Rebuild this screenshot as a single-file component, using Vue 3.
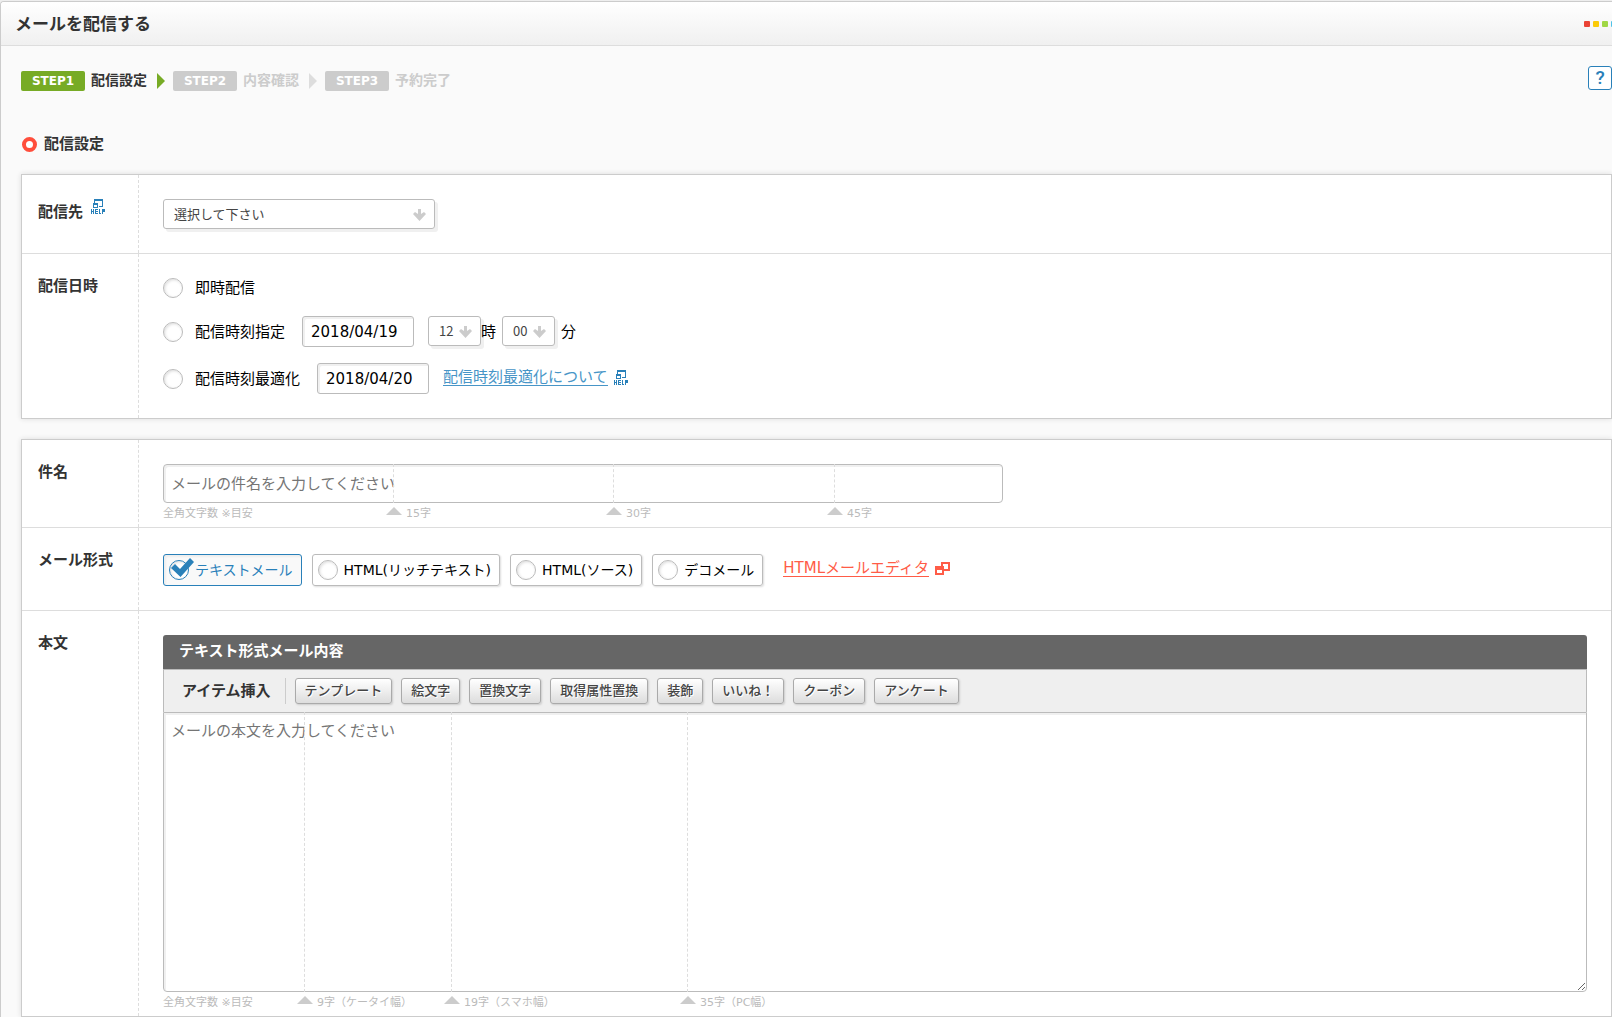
<script setup>
import { ref } from 'vue'

const steps = ['配信設定', '内容確認', '予約完了']
const timing = ref('')
const fixedDate = ref('2018/04/19')
const bestDate = ref('2018/04/20')
const subject = ref('')
const body = ref('')
const format = ref('text')
const formats = [
  { id: 'text', label: 'テキストメール' },
  { id: 'rich', label: 'HTML(リッチテキスト)' },
  { id: 'source', label: 'HTML(ソース)' },
  { id: 'deco', label: 'デコメール' }
]
const items = ['テンプレート', '絵文字', '置換文字', '取得属性置換', '装飾', 'いいね！', 'クーポン', 'アンケート']
const subjectMarks = [
  { left: 230, label: '15字' },
  { left: 450, label: '30字' },
  { left: 671, label: '45字' }
]
const bodyMarks = [
  { left: 141, label: '9字（ケータイ幅）' },
  { left: 288, label: '19字（スマホ幅）' },
  { left: 524, label: '35字（PC幅）' }
]
</script>

<template>
  <main class="page">
    <header class="bar">
      <h1>メールを配信する</h1>
      <div class="dots"><i class="red"></i><i class="yellow"></i><i class="green"></i><i class="blue"></i></div>
    </header>

    <div class="top">
      <ol class="steps">
        <li v-for="(s, i) in steps" :key="s" :class="{ on: i === 0 }">
          <b>STEP{{ i + 1 }}</b><span>{{ s }}</span><i v-if="i < 2"></i>
        </li>
      </ol>
      <button class="help" type="button">?</button>
    </div>

    <h2><i class="ring"></i>配信設定</h2>

    <section class="panel">
      <div class="row">
        <div class="name">
          <label for="target">配信先</label>
          <a class="help-icon" href="#" aria-label="ヘルプ">
            <svg width="14" height="15" viewBox="0 0 14 15" shape-rendering="crispEdges" fill="#2980b9">
              <path d="M3 0h9v8H8V7h3V2H4v2H3zM2 4h5v5H2zM3 6v2h3V6z" fill-rule="evenodd" />
              <path d="M0 10h1v2h1v-2h1v5H2v-2H1v2H0zM4 10h3v1H5v1h2v1H5v1h2v1H4zM8 10h1v4h1v1H8zM11 10h3v3h-2v2h-1z" />
            </svg>
          </a>
        </div>
        <div class="value">
          <div class="select wide">
            <select id="target"><option>選択して下さい</option></select>
            <svg viewBox="0 0 14 13"><path d="M5 0h3v5l3-2 2 2-6.500 7L0 5l2-2 3 2z" /></svg>
          </div>
        </div>
      </div>

      <div class="row">
        <div class="name">配信日時</div>
        <div class="value timing">
          <div class="line first">
            <label class="choice"><input v-model="timing" type="radio" name="timing" value="now">即時配信</label>
          </div>
          <div class="line">
            <label class="choice"><input v-model="timing" type="radio" name="timing" value="fixed">配信時刻指定</label>
            <input v-model="fixedDate" class="date" type="text" aria-label="配信日">
            <div class="select small">
              <select id="hour"><option>12</option></select>
              <svg viewBox="0 0 14 13"><path d="M5 0h3v5l3-2 2 2-6.500 7L0 5l2-2 3 2z" /></svg>
            </div>
            <label class="hour" for="hour">時</label>
            <div class="select small">
              <select id="minute"><option>00</option></select>
              <svg viewBox="0 0 14 13"><path d="M5 0h3v5l3-2 2 2-6.500 7L0 5l2-2 3 2z" /></svg>
            </div>
            <label class="minute" for="minute">分</label>
          </div>
          <div class="line">
            <label class="choice"><input v-model="timing" type="radio" name="timing" value="best">配信時刻最適化</label>
            <input v-model="bestDate" class="date" type="text" aria-label="最適化の配信日">
            <a class="about" href="#"><span>配信時刻最適化について</span>
              <svg width="14" height="15" viewBox="0 0 14 15" shape-rendering="crispEdges" fill="#2980b9">
                <path d="M3 0h9v8H8V7h3V2H4v2H3zM2 4h5v5H2zM3 6v2h3V6z" fill-rule="evenodd" />
                <path d="M0 10h1v2h1v-2h1v5H2v-2H1v2H0zM4 10h3v1H5v1h2v1H5v1h2v1H4zM8 10h1v4h1v1H8zM11 10h3v3h-2v2h-1z" />
              </svg>
            </a>
          </div>
        </div>
      </div>
    </section>

    <section class="panel">
      <div class="row">
        <label class="name" for="subject">件名</label>
        <div class="value ruled">
          <div class="field subject">
            <input id="subject" v-model="subject" type="text" placeholder="メールの件名を入力してください">
            <i v-for="m in subjectMarks" :key="m.label" class="guide" :style="{ left: m.left + 'px' }"></i>
          </div>
          <div class="ruler">
            <span>全角文字数 ※目安</span>
            <span v-for="m in subjectMarks" :key="m.label" class="mark" :style="{ left: m.left + 'px' }">{{ m.label }}</span>
          </div>
        </div>
      </div>

      <div class="row">
        <div class="name">メール形式</div>
        <div class="value formats">
          <label v-for="f in formats" :key="f.id" class="format" :class="{ on: format === f.id }">
            <input v-model="format" type="radio" name="format" :value="f.id">
            <svg v-if="format === f.id" class="check" viewBox="0 0 24 20"><path d="M1 10l4-4 5 5L20 0l4 4-13.500 15z" /></svg>
            {{ f.label }}
          </label>
          <a class="editor-link" href="#"><span>HTMLメールエディタ</span>
            <svg width="15" height="13" viewBox="0 0 15 13" shape-rendering="crispEdges" fill="#ff5c47">
              <path d="M6 0h9v9H9V7h4V2H8v2H6zM0 4h9v9H0zM2 8v3h5V8z" fill-rule="evenodd" />
            </svg>
          </a>
        </div>
      </div>

      <div class="row">
        <label class="name" for="body">本文</label>
        <div class="value ruled">
          <div class="editor">
            <h3>テキスト形式メール内容</h3>
            <div class="tools">
              <strong>アイテム挿入</strong>
              <button v-for="t in items" :key="t" type="button">{{ t }}</button>
            </div>
            <div class="field">
              <textarea id="body" v-model="body" placeholder="メールの本文を入力してください"></textarea>
              <i v-for="m in bodyMarks" :key="m.label" class="guide" :style="{ left: m.left + 'px' }"></i>
            </div>
          </div>
          <div class="ruler">
            <span>全角文字数 ※目安</span>
            <span v-for="m in bodyMarks" :key="m.label" class="mark" :style="{ left: m.left + 'px' }">{{ m.label }}</span>
          </div>
        </div>
      </div>
    </section>
  </main>
</template>

<style>
body {
  background: #eee;
}
</style>

<style scoped>
* {
  box-sizing: border-box;
}
.page {
  margin-top: 1px;
  border: 1px solid #ccc;
  border-width: 1px 0 0 1px;
  border-radius: 4px 0 0 0;
  background: #fafafa;
  color: #333;
  font: 15px/20px "DejaVu Sans", "Noto Sans CJK JP", sans-serif;
  overflow: hidden;
}
input,
select,
textarea,
button {
  margin: 0;
  font: inherit;
}
.bar {
  display: flex;
  align-items: center;
  justify-content: space-between;
  height: 44px;
  padding-left: 14px;
  border-bottom: 1px solid #ddd;
  background: linear-gradient(#fff, #f0f0f0);
}
h1,
h2,
h3 {
  margin: 0;
}
h1 {
  font-size: 17px;
  line-height: 24px;
}
.dots {
  display: flex;
  gap: 3px;
  margin-right: -5px;
}
.dots i {
  width: 6px;
  height: 6px;
  border-radius: 1px;
}
.red { background: #ea4335; }
.yellow { background: #fbcb09; }
.green { background: #a0d745; }
.blue { background: #4fc3e8; }
.top {
  display: flex;
  justify-content: space-between;
  padding: 20px 0 0 20px;
}
.steps {
  display: flex;
  gap: 8px;
  margin: 5px 0 0;
  padding: 0;
  list-style: none;
  color: #ccc;
  font-size: 14px;
  font-weight: bold;
}
.steps li {
  display: flex;
  align-items: center;
  height: 20px;
}
.steps b {
  width: 64px;
  border-radius: 2px;
  background: #ccc;
  color: #fff;
  font-size: 12px;
  text-align: center;
}
.steps span {
  margin: 0 10px 0 6px;
  padding-bottom: 2px;
  line-height: 18px;
}
.steps i {
  border: 8px solid transparent;
  border-width: 8px 0 8px 8px;
  border-left-color: #ddd;
}
.steps .on { color: #333; }
.steps .on b { background: #77ab25; }
.steps .on i { border-left-color: #77ab25; }
.help {
  width: 24px;
  height: 24px;
  padding: 0;
  border: 1px solid #2980b9;
  border-radius: 3px;
  background: #fff;
  color: #2980b9;
  font: 500 19px/22px Roboto, sans-serif;
}
h2 {
  display: flex;
  align-items: center;
  gap: 7px;
  padding: 43px 0 0 21px;
  font-size: 15px;
  line-height: 20px;
}
.ring {
  width: 15px;
  height: 15px;
  border: 4px solid #ff4e3c;
  border-radius: 50%;
  background: #fff;
}
.panel {
  margin: 20px 0 0 20px;
  border: 1px solid #ccc;
  background: #fff;
  box-shadow: 0 0 5px #ddd;
}
.row {
  display: grid;
  grid-template-columns: 117px 1fr;
}
.row + .row {
  border-top: 1px solid #ddd;
}
.name {
  display: flex;
  gap: 8px;
  padding: 22px 0 0 16px;
  border-right: 1px dashed #ddd;
  font-weight: bold;
}
.row:first-child > .name > label {
  padding-top: 5px;
}
.help-icon {
  height: 16px;
  margin-top: 2px;
}
.help-icon svg {
  display: block;
}
.value {
  min-width: 0;
  padding: 24px;
  color: #000;
}
.select {
  position: relative;
  height: 30px;
}
.wide { width: 272px; }
.small { width: 53px; }
.select select {
  width: 100%;
  height: 30px;
  padding: 0 10px;
  appearance: none;
  border: 1px solid #bbb;
  border-radius: 3px;
  background: #fff;
  box-shadow: 3px 3px 0 #f0f0f0;
  color: #444;
  font: 13px/28px "Noto Sans CJK JP", sans-serif;
}
.select svg {
  position: absolute;
  top: 10px;
  right: 8px;
  width: 14px;
  height: 13px;
  fill: #ccc;
  pointer-events: none;
}
.timing {
  display: flex;
  flex-direction: column;
  gap: 16px;
}
.line {
  display: flex;
  align-items: center;
  height: 31px;
}
.line .select {
  align-self: flex-start;
}
.first {
  height: 20px;
  margin-bottom: 2px;
}
.choice {
  display: flex;
  align-items: center;
  gap: 12px;
  margin-right: 17px;
}
input[type="radio"] {
  flex: none;
  width: 20px;
  height: 20px;
  appearance: none;
  border: 1px solid #bbb;
  border-radius: 50%;
  background: #fff;
  box-shadow: inset 1px 1px 3px #ddd;
}
.date {
  width: 112px;
  height: 31px;
  margin-right: 14px;
  padding: 0 8px;
  border: 1px solid #bbb;
  border-radius: 3px;
  background: #fff;
  box-shadow: inset 2px 2px 0 #f0f0f0;
  color: #000;
}
.hour {
  position: relative;
  margin-right: 6px;
}
.minute { margin-left: 6px; }
.about,
.editor-link {
  display: flex;
  align-items: center;
  gap: 6px;
  color: #4795c7;
  text-decoration: none;
}
.about {
  padding-bottom: 2px;
}
.about span,
.editor-link span {
  border-bottom: 1px solid;
  line-height: 16px;
}
.ruled {
  padding-bottom: 5px;
}
.field {
  position: relative;
}
.subject {
  max-width: 840px;
}
.subject input,
textarea {
  display: block;
  width: 100%;
  height: 39px;
  padding: 0 7px;
  border: 1px solid #bbb;
  border-radius: 4px;
  background: #fff;
  box-shadow: inset 2px 2px 0 #f0f0f0;
}
textarea {
  height: 280px;
  padding: 8px 7px;
  border-radius: 0 0 4px 4px;
  resize: both;
}
::placeholder {
  color: #757575;
}
.guide {
  position: absolute;
  top: 0;
  bottom: 0;
  border-left: 1px dashed #ddd;
  pointer-events: none;
}
.ruler {
  position: relative;
  padding-top: 3px;
  color: #bbb;
  font-size: 11px;
  line-height: 16px;
}
.mark {
  position: absolute;
  top: 3px;
  display: flex;
  gap: 4px;
  margin-left: -7px;
  white-space: nowrap;
}
.mark::before {
  content: "";
  align-self: flex-start;
  margin-top: 1px;
  border: 8px solid transparent;
  border-top: 0;
  border-bottom-color: #ccc;
}
.formats {
  display: flex;
  align-items: flex-start;
  gap: 10px;
  padding-top: 26px;
}
.format {
  position: relative;
  display: flex;
  align-items: center;
  gap: 6px;
  height: 32px;
  padding: 0 8px 0 5px;
  border: 1px solid #bbb;
  border-radius: 3px;
  box-shadow: 1px 1px 2px #ddd;
  font-size: 14px;
}
.format.on {
  border-color: #2980b9;
  background: #f9f9f9;
  box-shadow: inset 2px 2px 2px #eee;
  color: #2980b9;
}
.format.on input {
  border-color: #2980b9;
}
.check {
  position: absolute;
  top: 3px;
  left: 6px;
  width: 24px;
  height: 20px;
  fill: #2980b9;
}
.editor-link {
  margin: 6px 0 0 10px;
  color: #ff5c47;
}
h3 {
  height: 34px;
  padding: 0 16px;
  border-radius: 3px 3px 0 0;
  background: #666;
  color: #fff;
  font-size: 15px;
  line-height: 32px;
}
.tools {
  display: flex;
  flex-wrap: wrap;
  align-items: center;
  gap: 9px;
  padding: 8px 18px;
  border: 1px solid #bbb;
  border-bottom: 0;
  background: #efefef;
  color: #333;
}
.tools strong {
  padding-right: 14px;
  border-right: 1px solid #ccc;
  line-height: 26px;
}
.tools button {
  height: 26px;
  padding: 0 9px;
  border: 1px solid #aaa;
  border-radius: 3px;
  background: linear-gradient(#fff, #ddd);
  box-shadow: 1px 1px 2px #ccc;
  color: #444;
  font-size: 13px;
  font-weight: 500;
  line-height: 22px;
  text-shadow: 1px 1px 0 #fff;
}
</style>
